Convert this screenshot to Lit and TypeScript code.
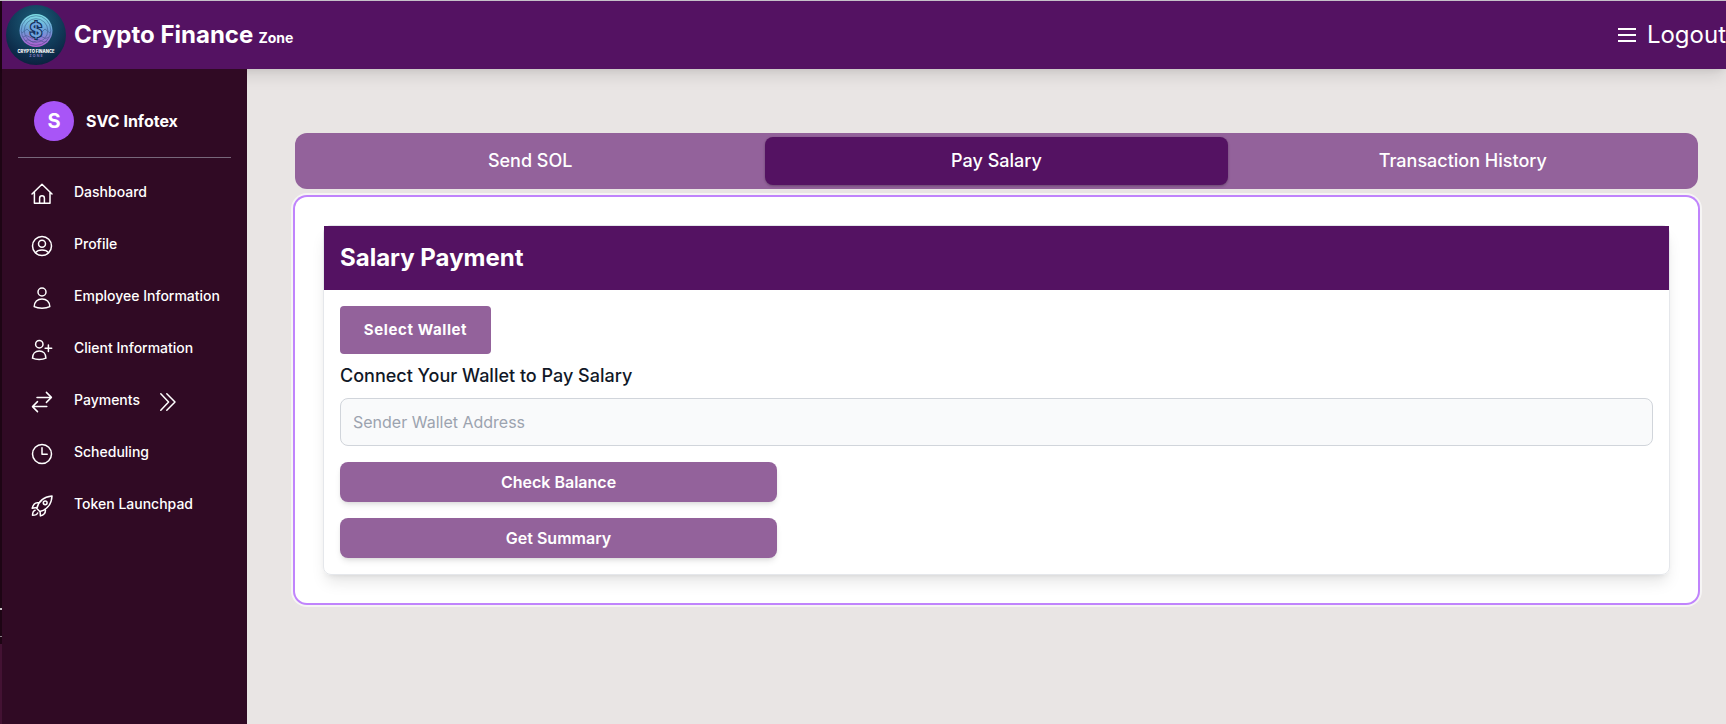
import { LitElement, html, css, svg } from "lit";
import { customElement, state } from "lit/decorators.js";

const ICONS: Record<string, unknown> = {
  home: svg`<path d="M2 12 12 2.2 22 12M4.4 10.2V21.2H20V10.2M9.6 21V16.2a2.3 2.3 0 0 1 4.8 0V21"/>`,
  profile: svg`<circle cx="12" cy="12" r="9.5"/><circle cx="12" cy="9.7" r="3.5"/><path d="M5.5 18.6c1.4-1.9 3.9-2.7 6.5-2.7s5.1.8 6.5 2.7"/>`,
  person: svg`<circle cx="12" cy="6" r="4"/><path d="M4.2 20.6C4.2 16 7.5 12.9 12 12.9s7.800 3.100 7.800 7.700c-4 2.100-11.600 2.100-15.600 0Z"/>`,
  personAdd: svg`<circle cx="9.3" cy="6.2" r="3.7"/><path d="M2.5 20.2C2.5 16 5.2 13 9.3 13s6.600 3 6.600 7.200c-3.600 1.800-9.800 1.800-13.400 0ZM18.400 7v6.600M15.100 10.300h6.600"/>`,
  transfer: svg`<path d="M7 7.400h14.300M16.400 2.400l5 5-5 5M16.800 16.600H2.600M7.500 11.600l-5 5 5 5"/>`,
  clock: svg`<circle cx="12" cy="12" r="9.500"/><path d="M12 5.700v6.500h5.200"/>`,
  rocket: svg`<path d="M8.300 16 6.800 14.500C8.300 7.800 13.200 2.700 22 1.900 21.600 10.500 16.500 15.900 9.800 17.500ZM8.300 8.800C5.400 8.300 3.200 10.400 2.200 14.200L6.800 13.400M15.400 15.600c.4 3.300-1.500 5.300-5 6.300L10.100 17.500M5.100 16.200C3 16.700 2.600 18.900 2.500 21.300c2.300 0 4.600-.4 5.200-2.400"/><circle cx="15.200" cy="8.800" r="1.900"/>`,
  chevrons: svg`<path d="M4.800 3.800 12.600 12l-7.800 8.200M10.800 3.800 19 12l-8.200 8.200"/>`,
};

const icon = (name: string) =>
  html`<svg width="24" height="24" viewBox="0 0 24 24" fill="none" stroke="currentColor" stroke-width="1.5" stroke-linecap="round" stroke-linejoin="round">${ICONS[name]}</svg>`;

const NAV = [
  { label: "Dashboard", icon: "home" },
  { label: "Profile", icon: "profile" },
  { label: "Employee Information", icon: "person" },
  { label: "Client Information", icon: "personAdd" },
  { label: "Payments", icon: "transfer", more: true },
  { label: "Scheduling", icon: "clock" },
  { label: "Token Launchpad", icon: "rocket" },
];

@customElement("brand-logo")
class BrandLogo extends LitElement {
  static styles = css`
    :host { display: block; width: 60px; height: 60px; }
    svg { display: block; }
    .name { font: 800 4.3px Inter, sans-serif; fill: #fff; }
    .zone { font: 600 3.6px Inter, sans-serif; fill: #8d7fc4; }
    .dollar { font: 600 19px Inter, sans-serif; fill: #6fa3dc; stroke: #15315c; stroke-width: 2.4px; paint-order: stroke; }
  `;
  render() {
    return html`<svg width="60" height="60" viewBox="0 0 60 60">
      <defs>
        <radialGradient id="bg" cx=".5" cy=".3" r=".75">
          <stop offset="0" stop-color="#1c6079" /><stop offset=".55" stop-color="#113c5a" /><stop offset="1" stop-color="#0a1d3b" />
        </radialGradient>
        <linearGradient id="coin" x1="0" y1="0" x2="0" y2="1">
          <stop offset="0" stop-color="#7de0e4" /><stop offset=".5" stop-color="#6c9ed8" /><stop offset="1" stop-color="#b45ad0" />
        </linearGradient>
      </defs>
      <circle cx="30" cy="30" r="30" fill="url(#bg)" />
      <circle cx="30" cy="25.500" r="16.500" fill="url(#coin)" />
      <g fill="none" stroke="#23406f" stroke-width=".7" opacity=".6">
        <circle cx="30" cy="25.500" r="14.800" />
        <circle cx="30" cy="25.500" r="11.800" />
        <path d="M16 28l5-4 4 4 5-5 5 5 4-4 5 4M17 32q3.500-3 6.500 0t6.500 0 6.500 0 6.500 0M19 36q3-2.500 5.500 0t5.500 0 5.500 0 5.500 0" />
      </g>
      <text class="dollar" x="30" y="32" text-anchor="middle">$</text>
      <text class="name" x="30" y="47.700" text-anchor="middle" textLength="37" lengthAdjust="spacingAndGlyphs">CRYPTO FINANCE</text>
      <text class="zone" x="30" y="52.300" text-anchor="middle" textLength="13.500">ZONE</text>
    </svg>`;
  }
}

@customElement("app-root")
class AppRoot extends LitElement {
  @state() tab = "Pay Salary";

  static styles = css`
    :host {
      display: flex; flex-direction: column; box-sizing: border-box;
      width: 100%; height: 724px; overflow: hidden;
      border-top: 1px solid #c5c0c8;
      background: #e9e5e4; color: #fff;
      font-family: Inter, sans-serif; font-size: 16px; line-height: 24px;
    }
    * { box-sizing: border-box; }
    h1, h2, h3 { margin: 0; }
    button { border: 0; margin: 0; color: inherit; font: inherit; cursor: pointer; }
    svg { display: block; flex: none; }
    .frame { display: flex; flex: 1; min-height: 0; }
    .edge {
      flex: none; width: 2px;
      background:
        linear-gradient(#c9c3c7, #c9c3c7) 0 607px / 2px 2px no-repeat,
        linear-gradient(#8e8089, #8e8089) 0 635px / 2px 1px no-repeat,
        linear-gradient(#1d0514 0 643px, #431233 643px);
    }
    .app { display: flex; flex: 1; flex-direction: column; min-width: 0; }
    header {
      display: flex; align-items: center; flex: none; height: 68px; padding-left: 4px;
      background: #541262; z-index: 1;
      box-shadow: 0 10px 15px -3px rgba(0,0,0,.1), 0 4px 6px -2px rgba(0,0,0,.06);
    }
    .brand { margin-left: 8px; padding-top: 2px; font-size: 24px; line-height: 32px; font-weight: 700; }
    .brand small { font-size: 14px; font-weight: 700; margin-left: -.5px; }
    .logout { display: flex; align-items: center; gap: 11px; margin-left: auto; padding: 0; background: none; font-size: 24px; line-height: 32px; }
    .body { display: flex; flex: 1; min-height: 0; }
    aside { flex: none; width: 245px; padding: 32px 16px 0; background: #300a24; z-index: 2; }
    .user { display: flex; align-items: center; gap: 12px; padding: 0 16px 16px; border-bottom: 1px solid #77677a; font-weight: 700; }
    .avatar { width: 40px; height: 40px; border-radius: 50%; background: #a855f7; display: grid; place-items: center; font-size: 20px; font-weight: 700; }
    nav { display: flex; flex-direction: column; padding: 8px 0 0 12px; }
    .item { display: flex; align-items: center; height: 52px; white-space: nowrap; font-size: 14px; line-height: 20px; font-weight: 500; }
    .item svg { margin-top: 3px; }
    .item .label { margin-left: 20px; }
    .item .more { margin-left: 16px; }
    main { flex: 1; min-width: 0; padding: 64px 28px 0 48px; }
    .tabs { display: flex; gap: 4px; padding: 4px; height: 56px; border-radius: 12px; background: #93629b; }
    .tab { flex: 1 1 0; padding: 0; border-radius: 8px; background: none; font-size: 18px; line-height: 28px; font-weight: 500; }
    .tab.active { background: #541262; box-shadow: 0 1px 3px rgba(0,0,0,.2), 0 1px 2px rgba(0,0,0,.1); }
    .panel {
      margin-top: 8px; padding: 28px; height: 406px; border-radius: 12px; background: #fff; color: #111827;
      box-shadow: 0 0 0 2px #c084fc, 0 0 0 4px rgba(255,255,255,.6);
    }
    .card { border: 1px solid #e5e7eb; border-radius: 8px; box-shadow: 0 10px 15px -3px rgba(0,0,0,.1), 0 4px 6px -4px rgba(0,0,0,.1); }
    .card h2 { padding: 16px; font-size: 24px; line-height: 32px; font-weight: 700; background: #541262; color: #fff; }
    .form { display: flex; flex-direction: column; align-items: flex-start; padding: 16px; }
    .wallet { width: 151px; height: 48px; padding: 0; border-radius: 4px; background: #93629b; color: #fff; font-size: 15px; letter-spacing: .6px; font-weight: 700; }
    .form h3 { margin: 8px 0; font-size: 18px; line-height: 28px; font-weight: 500; }
    .field { width: 100%; height: 48px; padding: 0 12px; border: 1px solid #d1d5db; border-radius: 8px; background: #f9fafb; font: inherit; }
    .field::placeholder { color: #9ca3af; opacity: 1; }
    .action { width: 437px; height: 40px; margin-top: 16px; padding: 0; border-radius: 8px; background: #93629b; color: #fff; font-weight: 600; box-shadow: 0 4px 6px -1px rgba(0,0,0,.1), 0 2px 4px -2px rgba(0,0,0,.1); }
  `;

  render() {
    return html`
      <div class="frame">
        <div class="edge"></div>
        <div class="app">
          <header>
            <brand-logo></brand-logo>
            <h1 class="brand">Crypto Finance <small>Zone</small></h1>
            <button class="logout">
              <svg width="18" height="14" viewBox="0 0 18 14"><path d="M0 0h18v2H0zM0 6h18v2H0zM0 12h18v2H0z" fill="currentColor" /></svg>
              <span>Logout</span>
            </button>
          </header>
          <div class="body">
            <aside>
              <div class="user"><span class="avatar">S</span><span>SVC Infotex</span></div>
              <nav>
                ${NAV.map((n) => html`<div class="item">
                  ${icon(n.icon)}<span class="label">${n.label}</span>
                  ${n.more ? html`<span class="more">${icon("chevrons")}</span>` : ""}
                </div>`)}
              </nav>
            </aside>
            <main>
              <div class="tabs">
                ${["Send SOL", "Pay Salary", "Transaction History"].map((t) => html`<button
                  class="tab ${t === this.tab ? "active" : ""}" @click=${() => (this.tab = t)}>${t}</button>`)}
              </div>
              <section class="panel">
                <div class="card">
                  <h2>Salary Payment</h2>
                  <div class="form">
                    <button class="wallet">Select Wallet</button>
                    <h3>Connect Your Wallet to Pay Salary</h3>
                    <input class="field" placeholder="Sender Wallet Address" />
                    <button class="action">Check Balance</button>
                    <button class="action">Get Summary</button>
                  </div>
                </div>
              </section>
            </main>
          </div>
        </div>
      </div>
    `;
  }
}
